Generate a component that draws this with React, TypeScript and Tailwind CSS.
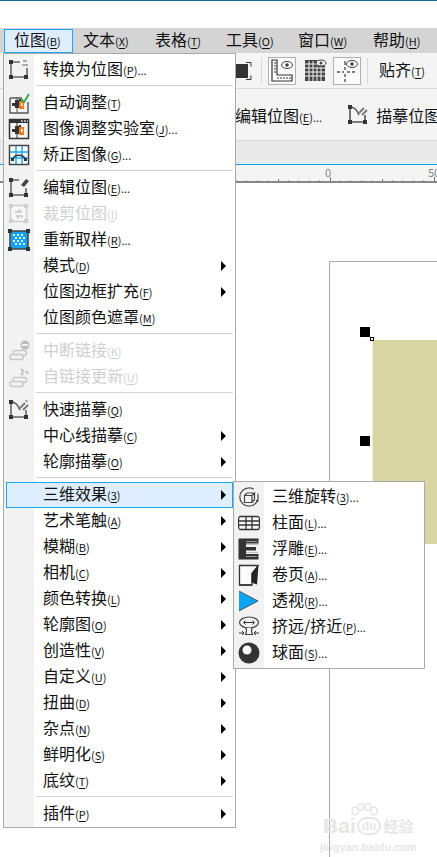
import React from "react";

const Nodes = ({ c = "#333" }: { c?: string }) => (
  <>
    <rect x="1" y="1" width="4" height="4" fill={c} />
    <rect x="16" y="16" width="4" height="4" fill={c} />
    <rect x="1" y="16" width="4" height="4" fill={c} />
  </>
);
const S = ({ children, w = 22 }: { children: React.ReactNode; w?: number }) => (
  <svg width={w} height={w} viewBox="0 0 22 22" className="block">
    {children}
  </svg>
);

const IConvert = () => (
  <S>
    <path d="M3 3H12M3 3V18H19V9" fill="none" stroke="#666" strokeWidth="1.6" />
    <Nodes />
    <path d="M15 2h4M14 6h6" stroke="#666" strokeWidth="1.2" />
  </S>
);
const Adjust = () => (
  <>
    <rect x="7" y="8" width="4" height="8" fill="#333" />
    <path d="M4 11h3v3H4zM11 7h2v2h-2z" fill="#333" />
    <rect x="11" y="9" width="5" height="8" fill="#f5781f" />
    <rect x="13" y="11" width="1.5" height="3" fill="#fff" />
  </>
);
const IAuto = () => (
  <S>
    <path d="M2 6H14M2 6V21H20V10" fill="#f4f4f4" stroke="#555" strokeWidth="1.4" />
    <path d="M9 6V21" stroke="#555" strokeWidth="1" />
    <Adjust />
    <path d="M13 7l3 3 5-8" fill="none" stroke="#2aa84a" strokeWidth="1.8" />
  </S>
);
const ILab = () => (
  <S>
    <rect x="1.5" y="1.5" width="19" height="19" fill="#f4f4f4" stroke="#333" strokeWidth="1.5" />
    <rect x="1" y="1" width="20" height="4" fill="#333" />
    <path d="M13 3h2M16 3h2M19 3h1" stroke="#ccc" strokeWidth="1.4" />
    <path d="M9 5V21" stroke="#333" />
    <Adjust />
  </S>
);
const IStraighten = () => (
  <S>
    <rect x="1.5" y="1.5" width="19" height="19" fill="#fff" stroke="#444" strokeWidth="1.5" />
    <path d="M8 2V20M14 2V20M2 8H20M2 14H20" stroke="#1fa7f2" strokeWidth="1.5" />
    <path d="M5 15c2-5 10-5 12 0" fill="none" stroke="#333" strokeWidth="1.5" />
    <path d="M3 14h3v3H3zM16 14h3v3h-3z" fill="#333" />
  </S>
);
const IEdit = () => (
  <S>
    <path d="M3 3H11M3 3V18H18V11" fill="none" stroke="#666" strokeWidth="1.6" />
    <Nodes />
    <path d="M13 8l5-6 3 2-5 6z" fill="#444" />
  </S>
);
const ICrop = () => (
  <S>
    <rect x="2.5" y="2.5" width="16" height="16" fill="#f7f7f7" stroke="#cfcfcf" strokeWidth="1.5" />
    <path d="M1 1h4v4H1zM16 1h4v4h-4zM1 16h4v4H1zM16 16h4v4h-4z" fill="#cfcfcf" />
    <path d="M7 9h6v-2M8 13h6v2M11 6v3M10 12v4" fill="none" stroke="#c4c4c4" strokeWidth="1.3" />
  </S>
);
const IResample = () => (
  <S>
    <rect x="2" y="2" width="18" height="18" fill="#16a2f3" stroke="#444" strokeWidth="1.5" />
    <path
      d="M5 5h2v2H5zM9 5h2v2H9zM13 5h2v2h-2zM7 8h2v2H7zM11 8h2v2h-2zM15 8h2v2h-2zM5 11h2v2H5zM9 11h2v2H9zM13 11h2v2h-2zM7 14h2v2H7zM11 14h2v2h-2zM15 14h2v2h-2z"
      fill="#d4effe"
    />
    <path d="M0 0h4v4H0zM18 0h4v4h-4zM0 18h4v4H0zM18 18h4v4h-4z" fill="#333" />
  </S>
);
const Link = () => (
  <path
    d="M2 17.5a2 2 0 0 1 2-2h9a2 2 0 0 1 0 5H4a2 2 0 0 1-2-2.5zM5 15v-1.5a2 2 0 0 1 2-2h9a2 2 0 0 1 0 5h-2"
    fill="none"
    stroke="#c8c8c8"
    strokeWidth="1.5"
  />
);
const IBreak = () => (
  <S>
    <g transform="translate(0,-1)">
      <Link />
    </g>
    <circle cx="17" cy="5" r="4.5" fill="#bdbdbd" />
    <rect x="14" y="4" width="6" height="2" fill="#f2f2f2" />
  </S>
);
const IRefresh = () => (
  <S>
    <Link />
    <path d="M13 3l3 3M18 5l2 3M13 7l2 2" stroke="#bdbdbd" strokeWidth="2" />
  </S>
);
const ITrace = () => (
  <S>
    <path d="M3 18V4M3 18H18V11" fill="none" stroke="#666" strokeWidth="1.6" />
    <path d="M3 3c5 0 7 3 9 8" fill="none" stroke="#555" strokeWidth="1.5" />
    <Nodes />
    <path d="M12 9l5-5M15 11l5-5" stroke="#777" strokeWidth="1.8" />
    <path d="M17 2h3" stroke="#999" strokeWidth="1.4" />
  </S>
);

const I3D = () => (
  <S>
    <circle cx="11" cy="11" r="9.2" fill="none" stroke="#555" strokeWidth="1.3" strokeDasharray="48 6" />
    <path d="M6.5 9.5h7.5v7H6.5zM6.5 9.5L9 7h7.5L14 9.5M14 16.5l2.5-3V7" fill="#f5f5f5" stroke="#444" strokeWidth="1.2" />
    <path d="M18 14l3 0-1.500 2.500z" fill="#444" />
  </S>
);
const ICyl = () => (
  <S>
    <path d="M2 4.500h18a1.500 6 0 0 1 0 13H2a1.500 6 0 0 1 0-13z" fill="#f8f8f8" stroke="#333" strokeWidth="1.4" />
    <path d="M1 9h20M1 13h20M8 5v12M14 5v12" stroke="#333" strokeWidth="1.3" />
  </S>
);
const IEmboss = () => (
  <S>
    <path d="M0.500 0.500H20.500V5.500H8V9H18V12.500H8V16H20.500V21.500H0.500z" fill="#333" />
    <path d="M8 3.500H19M8 18.500H19" stroke="#999" strokeWidth="1.200" />
    <path d="M8 6.500H20M8 14.500H20" stroke="#bbb" strokeWidth="1" />
  </S>
);
const ICurl = () => (
  <S>
    <path d="M1.500 1.500H20L14 10v11H1.500z" fill="#fbfbfb" stroke="#333" strokeWidth="1.300" />
    <path d="M20.500 1L19 20.500l-5.500-2V9z" fill="#222" />
    <path d="M1 21h13" stroke="#333" strokeWidth="1.300" />
  </S>
);
const IPersp = () => (
  <S>
    <path d="M1 1L20 11 1 21z" fill="#0aa5f2" />
    <path d="M1 1L20 11 1 21" fill="none" stroke="#555" strokeWidth="1" />
  </S>
);
const IExtrude = () => (
  <S>
    <ellipse cx="11" cy="6.500" rx="9.500" ry="5.500" fill="none" stroke="#444" strokeWidth="1.200" />
    <path d="M6 6.500h10M7.500 4.500L5.500 6.500l2 2M14.500 4.500l2 2-2 2" fill="none" stroke="#333" strokeWidth="1" />
    <path d="M8 12c1 2 1 3-.5 6.500h7C13 15 13 14 14 12" fill="#f5f5f5" stroke="#444" strokeWidth="1.200" />
    <path d="M1 17h5M21 17h-5M4 15l2 2-2 2M18 15l-2 2 2 2" fill="none" stroke="#333" strokeWidth="1" />
  </S>
);
const ISphere = () => (
  <S>
    <circle cx="11" cy="11" r="10.500" fill="#333" />
    <circle cx="9" cy="8" r="4.500" fill="#fafafa" />
  </S>
);

type Row =
  | "sep"
  | {
      t: string;
      k: string;
      dots?: boolean;
      arrow?: boolean;
      off?: boolean;
      hi?: boolean;
      icon?: React.ReactNode;
    };

const main: Row[] = [
  { t: "转换为位图", k: "P", dots: true, icon: <IConvert /> },
  "sep",
  { t: "自动调整", k: "T", icon: <IAuto /> },
  { t: "图像调整实验室", k: "J", dots: true, icon: <ILab /> },
  { t: "矫正图像", k: "G", dots: true, icon: <IStraighten /> },
  "sep",
  { t: "编辑位图", k: "E", dots: true, icon: <IEdit /> },
  { t: "裁剪位图", k: "I", off: true, icon: <ICrop /> },
  { t: "重新取样", k: "R", dots: true, icon: <IResample /> },
  { t: "模式", k: "D", arrow: true },
  { t: "位图边框扩充", k: "F", arrow: true },
  { t: "位图颜色遮罩", k: "M" },
  "sep",
  { t: "中断链接", k: "K", off: true, icon: <IBreak /> },
  { t: "自链接更新", k: "U", off: true, icon: <IRefresh /> },
  "sep",
  { t: "快速描摹", k: "Q", icon: <ITrace /> },
  { t: "中心线描摹", k: "C", arrow: true },
  { t: "轮廓描摹", k: "O", arrow: true },
  "sep",
  { t: "三维效果", k: "3", arrow: true, hi: true },
  { t: "艺术笔触", k: "A", arrow: true },
  { t: "模糊", k: "B", arrow: true },
  { t: "相机", k: "C", arrow: true },
  { t: "颜色转换", k: "L", arrow: true },
  { t: "轮廓图", k: "O", arrow: true },
  { t: "创造性", k: "V", arrow: true },
  { t: "自定义", k: "U", arrow: true },
  { t: "扭曲", k: "D", arrow: true },
  { t: "杂点", k: "N", arrow: true },
  { t: "鲜明化", k: "S", arrow: true },
  { t: "底纹", k: "T", arrow: true },
  "sep",
  { t: "插件", k: "P", arrow: true },
];

const sub: Row[] = [
  { t: "三维旋转", k: "3", dots: true, icon: <I3D /> },
  { t: "柱面", k: "L", dots: true, icon: <ICyl /> },
  { t: "浮雕", k: "E", dots: true, icon: <IEmboss /> },
  { t: "卷页", k: "A", dots: true, icon: <ICurl /> },
  { t: "透视", k: "R", dots: true, icon: <IPersp /> },
  { t: "挤远/挤近", k: "P", dots: true, icon: <IExtrude /> },
  { t: "球面", k: "S", dots: true, icon: <ISphere /> },
];

const Label = ({ t, k, dots }: { t: string; k: string; dots?: boolean }) => (
  <span className="whitespace-nowrap pb-[5px] text-[16px] leading-none">
    {t}
    <span className="text-[11px]">
      (<span className="underline underline-offset-2">{k}</span>)
    </span>
    {dots ? <span className="text-[11px]">...</span> : null}
  </span>
);

const MenuRows = ({ rows, gutter, textGap }: { rows: Row[]; gutter: string; textGap: string }) => (
  <>
    {rows.map((r, i) =>
      r === "sep" ? (
        <div key={i} className="flex h-[7px] items-start">
          <div className={`${gutter} h-full shrink-0 bg-[#f2f2f2]`} />
          <div className="mt-[2px] ml-[2px] mr-[2px] h-[1px] flex-1 bg-[#d2d2d2]" />
        </div>
      ) : (
        <div
          key={i}
          className={`relative flex h-[26px] items-center ${r.off ? "text-[#cfcfcf]" : "text-[#111]"}`}
        >
          <div className={`${gutter} flex h-full shrink-0 items-center justify-center bg-[#f2f2f2]`}>{r.icon}</div>
          {r.hi ? (
            <div className="absolute top-0 left-[2px] right-[2px] bottom-0 border border-[#1aa8f5] bg-[#deeefe]" />
          ) : null}
          <div className={`relative flex flex-1 items-center ${textGap}`}>
            <Label t={r.t} k={r.k} dots={r.dots} />
            {r.arrow ? (
              <span className="absolute right-[9px] top-1/2 h-0 w-0 -translate-y-1/2 border-y-[5px] border-l-[5px] border-y-transparent border-l-black" />
            ) : null}
          </div>
        </div>
      )
    )}
  </>
);

const TopItem = ({ t, k, w, active }: { t: string; k: string; w: string; active?: boolean }) => (
  <div
    className={`flex h-[24px] ${w} shrink-0 items-center border ${
      active ? "border-[#1aa8f5] bg-[#deeefe]" : "border-transparent"
    } pl-[9px]`}
  >
    <span className="whitespace-nowrap pb-[3px] text-[16px] leading-none text-[#111]">
      {t}
      <span className="text-[11px]">
        (<span className="underline underline-offset-2">{k}</span>)
      </span>
    </span>
  </div>
);

const Ruler = () => {
  const ticks = [];
  for (let i = -9; i <= 10; i++) {
    const x = 93.5 + i * 10.4;
    const big = i % 10 === 0;
    const mid = Math.abs(i) === 5;
    const h = big ? 5 : mid ? 3 : 1.5;
    ticks.push(<rect key={i} x={Math.round(x)} y={17 - h} width="1" height={h} fill="#777" />);
  }
  return (
    <svg width="201" height="17" viewBox="0 0 201 17" className="block">
      {ticks}
    </svg>
  );
};

export default function App() {
  return (
    <div className="relative flex h-[857px] w-[437px] flex-col overflow-hidden bg-white font-['Noto_Sans_CJK_SC','Noto_Sans',sans-serif]">
      <div className="h-[1px] shrink-0 bg-[#0c6b8e]" />
      <div className="h-[27px] shrink-0 bg-white" />
      <div className="flex h-[25px] shrink-0 items-center bg-[#d4d4d4] pl-[4px]">
        <TopItem t="位图" k="B" w="w-[69px]" active />
        <TopItem t="文本" k="X" w="w-[72px]" />
        <TopItem t="表格" k="T" w="w-[71px]" />
        <TopItem t="工具" k="O" w="w-[72px]" />
        <TopItem t="窗口" k="W" w="w-[75px]" />
        <TopItem t="帮助" k="H" w="w-[64px]" />
      </div>

      {/* toolbar 1 */}
      <div className="flex h-[36px] shrink-0 items-center border-b border-[#d8d8d8] bg-[#f4f4f4] pl-[236px]">
        <svg width="16" height="18" viewBox="0 0 16 18" className="block">
          <rect x="0" y="2" width="12" height="14" fill="#333" />
          <path d="M10 .5h5v4M15 13.500v4h-5" fill="none" stroke="#333" />
        </svg>
        <div className="ml-[9px] h-[26px] w-[1px] bg-[#d8d8d8]" />
        <div className="ml-[6px] flex h-[28px] w-[28px] items-center justify-center border border-[#b0b0b0] bg-[#fbfbfb]">
          <svg width="24" height="24" viewBox="0 0 24 24">
            <path d="M2 1h5v15h15v6H2z" fill="#fff" stroke="#333" strokeWidth="1.200" />
            <path d="M4 4h2M4 7h2M4 10h2M4 13h2M8 20v-2M11 20v-2M14 20v-2M17 20v-2M20 20v-2" stroke="#333" />
            <ellipse cx="17" cy="6" rx="5.500" ry="3.500" fill="none" stroke="#444" />
            <circle cx="17" cy="6" r="1.800" fill="#444" />
          </svg>
        </div>
        <div className="ml-[7px] flex h-[24px] w-[24px] items-center justify-center">
          <svg width="24" height="24" viewBox="0 0 24 24">
            <path d="M2 1h12v6h8v15H2z" fill="#444" />
            <path
              d="M6 2v20M10 2v20M14 8v14M18 8v14M2 5h12M2 9h20M2 13h20M2 17h20"
              stroke="#f4f4f4"
              strokeWidth="1"
            />
            <ellipse cx="18" cy="4" rx="5" ry="3" fill="#f4f4f4" stroke="#444" />
            <circle cx="18" cy="4" r="1.500" fill="#444" />
          </svg>
        </div>
        <div className="ml-[6px] flex h-[28px] w-[28px] items-center justify-center border border-[#b0b0b0] bg-[#fbfbfb]">
          <svg width="24" height="24" viewBox="0 0 24 24">
            <path d="M10 2v4M10 8v3M10 15v3M10 20v3M2 13h3M7 13h2M12 13h3M17 13h3" stroke="#555" strokeWidth="1.400" />
            <ellipse cx="17" cy="5" rx="5.500" ry="3.500" fill="none" stroke="#444" />
            <circle cx="17" cy="5" r="1.800" fill="#444" />
          </svg>
        </div>
        <div className="ml-[6px] h-[26px] w-[1px] bg-[#d8d8d8]" />
        <span className="ml-[11px] whitespace-nowrap pb-[3px] text-[16px] leading-none text-[#111]">
          贴齐
          <span className="text-[11px]">
            (<span className="underline underline-offset-2">T</span>)
          </span>
        </span>
      </div>

      {/* toolbar 2 */}
      <div className="flex h-[52px] shrink-0 items-center border-b border-[#d8d8d8] bg-[#f4f4f4] pl-[235px]">
        <span className="whitespace-nowrap text-[16px] leading-none text-[#111]">
          编辑位图
          <span className="text-[11px]">
            (<span className="underline underline-offset-2">E</span>)...
          </span>
        </span>
        <div className="ml-[15px] h-[44px] w-[1px] bg-[#d8d8d8]" />
        <div className="ml-[10px]">
          <S>
            <path d="M3 18V4M3 18H18V11" fill="none" stroke="#555" strokeWidth="1.600" />
            <path d="M3 3c5 0 7 3 9 8" fill="none" stroke="#555" strokeWidth="1.500" />
            <Nodes />
            <path d="M12 9l5-5M15 11l5-5" stroke="#777" strokeWidth="1.800" />
          </S>
        </div>
        <span className="ml-[7px] whitespace-nowrap text-[16px] leading-none text-[#111]">描摹位图</span>
      </div>

      <div className="h-[23px] shrink-0 bg-[#e9e9e9]" />

      {/* ruler */}
      <div className="h-[19px] shrink-0 border-t border-b-2 border-t-[#0aa5f2] border-b-[#888] bg-[#f4f4f4] pl-[236px]">
        <div className="relative h-full">
          <Ruler />
          <span className="absolute left-[89px] top-[0px] text-[11px] leading-[14px] text-[#888]">0</span>
          <span className="absolute left-[192px] top-[0px] text-[11px] leading-[14px] text-[#888]">50</span>
        </div>
      </div>

      {/* canvas */}
      <div className="relative flex-1 bg-white">
        <div className="absolute left-[329px] top-[78px] h-[620px] w-[120px] border-t border-l border-[#aaa]" />
        <div className="absolute left-[372px] top-[157px] h-[204px] w-[65px] border-l border-[#eeeedd] bg-[#d9d5a3]" />
        <div className="absolute left-[360px] top-[144px] h-[10px] w-[10px] bg-black" />
        <div className="absolute left-[370px] top-[154px] h-[4px] w-[4px] border border-black bg-white" />
        <div className="absolute left-[360px] top-[253px] h-[10px] w-[10px] bg-black" />
        {/* watermark */}
        <div className="absolute left-[320px] top-[632px] flex flex-col items-center text-[#e6e6e6]">
          <svg width="28" height="14" viewBox="0 0 28 14" className="absolute left-[30px] top-[-12px] block">
            <ellipse cx="5" cy="8" rx="3" ry="4" fill="none" stroke="#e6e6e6" strokeWidth="1.500" />
            <ellipse cx="11" cy="4" rx="3" ry="3.500" fill="none" stroke="#e6e6e6" strokeWidth="1.500" />
            <ellipse cx="18" cy="4" rx="3" ry="3.500" fill="none" stroke="#e6e6e6" strokeWidth="1.500" />
            <ellipse cx="24" cy="8" rx="3" ry="4" fill="none" stroke="#e6e6e6" strokeWidth="1.500" />
          </svg>
          <div className="flex items-center">
            <span className="text-[21px] font-bold leading-none font-['Liberation_Sans',sans-serif]">Bai</span>
            <span className="mx-[1px] rounded-full border-2 border-[#e6e6e6] px-[3px] text-[12px] font-bold leading-[14px] font-['Liberation_Sans',sans-serif]">
              du
            </span>
            <span className="ml-[1px] text-[15px] font-bold leading-none">经验</span>
          </div>
          <span className="mt-[6px] text-[11px] font-bold leading-none font-['Liberation_Sans',sans-serif]">
            jingyan.baidu.com
          </span>
        </div>
      </div>

      {/* main menu */}
      <div className="absolute left-[3px] top-[53px] w-[233px] border border-[#aaa] bg-white">
        <div className="flex h-[3px]">
          <div className="w-[30px] bg-[#f2f2f2]" />
        </div>
        <MenuRows rows={main} gutter="w-[30px]" textGap="pl-[9px]" />
      </div>

      {/* sub menu */}
      <div className="absolute left-[233px] top-[481px] w-[192px] border border-[#aaa] bg-white py-[2px]">
        <div className="absolute bottom-0 left-0 top-0 w-[30px] bg-[#f2f2f2]" />
        <MenuRows rows={sub} gutter="w-[30px]" textGap="pl-[8px]" />
      </div>
    </div>
  );
}
